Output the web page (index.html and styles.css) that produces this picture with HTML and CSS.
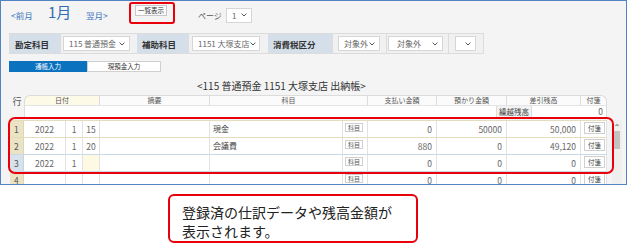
FILE: index.html
```html
<!DOCTYPE html>
<html lang="ja">
<head>
<meta charset="utf-8">
<title>出納帳</title>
<link rel="stylesheet" href="styles.css">
</head>
<body>
<div class="frame">
  <div class="topbar">
    <span class="nav prev">&lt;前月</span>
    <span class="month">1月</span>
    <span class="nav next">翌月&gt;</span>
    <div class="listwrap"><span class="btn-list">一覧表示</span></div>
    <span class="page-label">ページ</span>
    <div class="sel sel-page"><span>1</span><svg class="chev" width="6" height="4" viewBox="0 0 6 4"><polyline points="0.6,0.6 3,3 5.4,0.6" fill="none" stroke="#555" stroke-width="1"/></svg></div>
  </div>

  <div class="filters">
    <div class="flabel fl-1">勘定科目</div>
    <div class="fcell fc-1"><div class="sel s-1"><span>115 普通預金</span><svg class="chev" width="6" height="4" viewBox="0 0 6 4"><polyline points="0.6,0.6 3,3 5.4,0.6" fill="none" stroke="#555" stroke-width="1"/></svg></div></div>
    <div class="flabel fl-2">補助科目</div>
    <div class="fcell fc-2"><div class="sel s-2"><span>1151 大塚支店</span><svg class="chev" width="6" height="4" viewBox="0 0 6 4"><polyline points="0.6,0.6 3,3 5.4,0.6" fill="none" stroke="#555" stroke-width="1"/></svg></div></div>
    <div class="flabel fl-3">消費税区分</div>
    <div class="fcell fc-3"><div class="sel s-3"><span>対象外</span><svg class="chev" width="6" height="4" viewBox="0 0 6 4"><polyline points="0.6,0.6 3,3 5.4,0.6" fill="none" stroke="#555" stroke-width="1"/></svg></div></div>
    <div class="fcell fc-4"><div class="sel s-4"><span>対象外</span><svg class="chev" width="6" height="4" viewBox="0 0 6 4"><polyline points="0.6,0.6 3,3 5.4,0.6" fill="none" stroke="#555" stroke-width="1"/></svg></div></div>
    <div class="fcell fc-5"><div class="sel s-5"><svg class="chev" width="6" height="4" viewBox="0 0 6 4"><polyline points="0.6,0.6 3,3 5.4,0.6" fill="none" stroke="#555" stroke-width="1"/></svg></div></div>
  </div>

  <div class="tabs">
    <div class="tab tab-active">通帳入力</div>
    <div class="tab tab-plain">現預金入力</div>
  </div>

  <div class="title">&lt;115 普通預金 1151 大塚支店 出納帳&gt;</div>

  <div class="ledger">
    <div class="cols lhead">
      <div class="h-gyo">行</div>
      <div class="h h-date">日付</div>
      <div class="h h-span1">摘要</div>
      <div class="h h-kamoku">科目</div>
      <div class="h">支払い金額</div>
      <div class="h">預かり金額</div>
      <div class="h">差引残高</div>
      <div class="h h-last">付箋</div>
      <div class="carry">
        <span class="carry-label">繰越残高</span>
        <span class="carry-val">0</span>
      </div>
    </div>

    <div class="lbody-wrap">
      <div class="lbody">
        <div class="cols row">
          <div class="c num">1</div>
          <div class="c ctr">2022</div>
          <div class="c ctr">1</div>
          <div class="c ctr">15</div>
          <div class="c"></div>
          <div class="c lt">現金</div>
          <div class="c"><span class="kbtn">科目</span></div>
          <div class="c rt">0</div>
          <div class="c rt">50000</div>
          <div class="c rt">50,000</div>
          <div class="c"><span class="fbtn">付箋</span></div>
        </div>
        <div class="cols row row-before-sel">
          <div class="c num">2</div>
          <div class="c ctr">2022</div>
          <div class="c ctr">1</div>
          <div class="c ctr">20</div>
          <div class="c"></div>
          <div class="c lt">会議費</div>
          <div class="c"><span class="kbtn">科目</span></div>
          <div class="c rt">880</div>
          <div class="c rt">0</div>
          <div class="c rt">49,120</div>
          <div class="c"><span class="fbtn">付箋</span></div>
        </div>
        <div class="cols row row-sel">
          <div class="c num">3</div>
          <div class="c ctr">2022</div>
          <div class="c ctr">1</div>
          <div class="c active"></div>
          <div class="c"></div>
          <div class="c lt"></div>
          <div class="c"><span class="kbtn">科目</span></div>
          <div class="c rt">0</div>
          <div class="c rt">0</div>
          <div class="c rt">0</div>
          <div class="c"><span class="fbtn">付箋</span></div>
        </div>
        <div class="cols row">
          <div class="c num">4</div>
          <div class="c ctr"></div>
          <div class="c ctr"></div>
          <div class="c ctr"></div>
          <div class="c"></div>
          <div class="c lt"></div>
          <div class="c"><span class="kbtn">科目</span></div>
          <div class="c rt">0</div>
          <div class="c rt">0</div>
          <div class="c rt">0</div>
          <div class="c"><span class="fbtn">付箋</span></div>
        </div>
      </div>
      <div class="scroll">
        <svg class="scroll-up" width="10" height="9" viewBox="0 0 10 9"><polygon points="2.5,6 5,3.5 7.5,6" fill="#a0a0a0"/></svg>
        <div class="thumb"></div>
      </div>
    </div>
  </div>

  <div class="mark mark-list"></div>
  <div class="mark mark-rows"></div>
</div>

<div class="callout">登録済の仕訳データや残高金額が<br>表示されます。</div>
</body>
</html>
```

FILE: styles.css
```css
* { box-sizing: border-box; }

body {
  margin: 0;
  background: #ffffff;
  font-family: "Noto Sans CJK JP", "Noto Sans", sans-serif;
  color: #333;
}

.frame {
  position: relative;
  width: 627px;
  height: 185px;
  border: 1px solid #5283c4;
  background: #f4f4f4;
  overflow: hidden;
  padding-left: 8px;
}

/* top bar */
.topbar {
  display: flex;
  align-items: center;
  height: 28px;
}
.nav { font-size: 8.5px; color: #3f74bf; line-height: 12px; }
.prev { width: 37px; margin-left: 2px; }
.month {
  width: 38px;
  font-size: 15px;
  line-height: 20px;
  color: #2f6db6;
  align-self: flex-start;
  margin-top: 1px;
}
.next { width: 43px; }
.listwrap {
  width: 45px;
  align-self: flex-start;
  padding: 4px 0 0 6px;
}
.btn-list {
  display: block;
  width: 32px;
  height: 11px;
  border: 1px solid #c8c8c8;
  background: #fafafa;
  font-size: 6.5px;
  line-height: 9px;
  text-align: center;
  color: #333;
}
.page-label { margin-left: 24px; width: 28px; font-size: 8px; color: #555; }

.sel {
  display: flex;
  align-items: center;
  justify-content: space-between;
  height: 15px;
  background: #fff;
  border: 1px solid #d6d6d6;
  font-size: 8px;
  line-height: 13px;
  color: #666;
  padding: 0 4px 0 5px;
  white-space: nowrap;
}
.chev { display: block; flex: none; }
.sel-page { width: 26px; }

/* filter row */
.filters {
  display: flex;
  margin-top: 4px;
  width: 475px;
  height: 21px;
  border: 1px solid #dcdcdc;
  background: #f1f1f1;
}
.flabel {
  display: flex;
  align-items: center;
  padding-left: 5px;
  background: #d4dfe9;
  font-weight: bold;
  font-size: 8.5px;
  color: #333;
  white-space: nowrap;
}
.fcell {
  display: flex;
  align-items: center;
  border-left: 1px solid #dcdcdc;
}
.fl-1 { width: 50px; }
.fc-1 { width: 77px; padding-left: 2px; }
.s-1 { width: 67px; }
.fl-2 { width: 51px; }
.fc-2 { width: 80px; padding-left: 3px; }
.s-2 { width: 68px; }
.fl-3 { width: 64px; }
.fc-3 { width: 54px; padding-left: 5px; }
.s-3 { width: 42px; }
.fc-4 { width: 62px; padding-left: 1px; }
.s-4 { width: 55px; padding-left: 8px; }
.fc-5 { width: 35px; padding-left: 6px; }
.s-5 { width: 21px; justify-content: flex-end; }

/* tabs */
.tabs {
  display: flex;
  margin-top: 7px;
  height: 11px;
}
.tab {
  font-size: 6.5px;
  line-height: 9px;
  text-align: center;
}
.tab-active {
  width: 78px;
  background: #0b72c0;
  border: 1px solid #0b72c0;
  color: #fff;
}
.tab-plain {
  width: 74px;
  background: #fff;
  border: 1px solid #d0d0d0;
  color: #333;
}

/* title */
.title {
  height: 23px;
  padding: 5px 0 0 188px;
  font-size: 10px;
  line-height: 18px;
  color: #333;
  white-space: nowrap;
}

/* ledger */
.ledger { margin-left: 1px; }
.cols {
  display: grid;
  grid-template-columns: 14px 42px 17px 17px 110px 133px 25px 69px 70px 74px 26px;
}
.lhead { grid-template-rows: 11px 11px; }
.h-gyo {
  grid-row: 1 / 3;
  font-size: 9px;
  line-height: 14px;
  text-align: center;
  color: #555;
}
.h {
  background: #fbfbfb;
  border-top: 1px solid #dcdcdc;
  border-right: 1px solid #dcdcdc;
  border-bottom: 1px solid #e4e4e4;
  font-size: 7px;
  line-height: 9px;
  text-align: center;
  color: #555;
}
.h-date {
  grid-column: 2 / 5;
  background: #fdfbe8;
  border-left: 1px solid #dcdcdc;
  border-top-left-radius: 6px;
}
.h-kamoku { grid-column: 6 / 8; }
.h-last { border-top-right-radius: 6px; }
.carry {
  grid-column: 2 / 12;
  display: flex;
  justify-content: flex-end;
  background: #fff;
  border-left: 1px solid #dcdcdc;
  border-right: 1px solid #dcdcdc;
}
.carry-label {
  width: 36px;
  background: #f2f2f2;
  border-left: 1px solid #dcdcdc;
  border-right: 1px solid #dcdcdc;
  font-size: 7.5px;
  line-height: 11px;
  text-align: center;
  color: #444;
}
.carry-val {
  width: 74px;
  padding-right: 3px;
  text-align: right;
  font-size: 8.5px;
  line-height: 11px;
  color: #666;
}

.lbody-wrap {
  display: flex;
  margin-top: 3px;
}
.lbody {
  width: 597px;
  border-top: 1px solid #e4ddbd;
}
.row { height: 17px; }
.c {
  background: #fff;
  border-right: 1px solid #e2e2e2;
  border-bottom: 1px solid #e4ddbd;
  font-size: 8.5px;
  line-height: 16px;
  color: #666;
  white-space: nowrap;
  overflow: hidden;
}
.row-before-sel .c,
.row-sel .c { border-bottom-color: #cad8e6; }
.num {
  background: #ebe4c4;
  padding-left: 4px;
  border-right-color: #ddd6b5;
  color: #555;
}
.row-sel .num { background: #d7e2ed; border-right-color: #c6d4e2; }
.ctr { text-align: center; }
.rt { text-align: right; padding-right: 4px; }
.lt { padding-left: 3px; font-size: 8px; color: #444; }
.active { background: #fdf9e2; }

.kbtn {
  display: block;
  width: 18px;
  height: 9px;
  margin: 2px 0 0 2px;
  border: 1px solid #cfcfcf;
  background: #fff;
  font-size: 6px;
  line-height: 7px;
  text-align: center;
  color: #555;
}
.fbtn {
  display: block;
  width: 21px;
  height: 12px;
  margin: 1px 0 0 3px;
  border: 1px solid #cfcfcf;
  background: #fff;
  font-size: 6.5px;
  line-height: 10px;
  text-align: center;
  color: #444;
}

.scroll {
  width: 10px;
  height: 64px;
  margin-left: 5px;
  background: #efefef;
}
.scroll-up { display: block; }
.thumb {
  width: 6px;
  height: 18px;
  margin: 2px auto 0;
  background: #c3c3c3;
}

/* annotation overlays */
.mark {
  position: absolute;
  border: 2px solid #e8000b;
}
.mark-list {
  left: 128px;
  top: 1px;
  width: 46px;
  height: 22px;
  border-radius: 3px;
}
.mark-rows {
  left: 7px;
  top: 116px;
  width: 606px;
  height: 57px;
  border-radius: 7px;
}

/* callout */
.callout {
  margin: 9px 0 0 168px;
  width: 250px;
  height: 49px;
  border: 2px solid #e8000b;
  border-radius: 6px;
  background: #fff;
  padding: 7px 0 0 12px;
  font-size: 14px;
  line-height: 19px;
  color: #222;
  white-space: nowrap;
}
```
